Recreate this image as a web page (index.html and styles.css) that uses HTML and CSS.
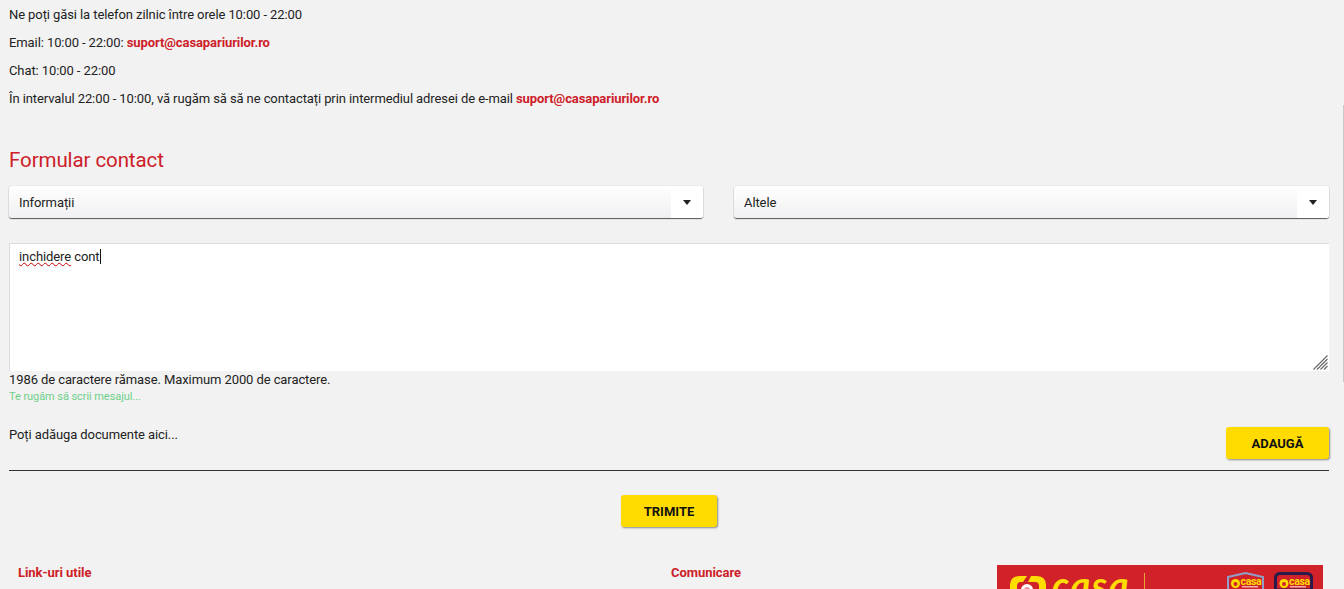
FILE: index.html
```html
<!DOCTYPE html>
<html lang="ro">
<head>
<meta charset="utf-8">
<title>Formular contact</title>
<link rel="stylesheet" href="styles.css">
</head>
<body>
<main class="page">
  <section class="info">
    <p>Ne poți găsi la telefon zilnic între orele 10:00 - 22:00</p>
    <p>Email: 10:00 - 22:00: <a href="#">suport@casapariurilor.ro</a></p>
    <p>Chat: 10:00 - 22:00</p>
    <p>În intervalul 22:00 - 10:00, vă rugăm să să ne contactați prin intermediul adresei de e-mail <a href="#">suport@casapariurilor.ro</a></p>
  </section>
  <h1 class="title">Formular contact</h1>
  <div class="selects">
    <div class="select"><span class="select-label">Informații</span><span class="select-btn"><i class="caret"></i></span></div>
    <div class="select"><span class="select-label">Altele</span><span class="select-btn"><i class="caret"></i></span></div>
  </div>
  <div class="textarea">
    <span class="typed"><span class="misspelled">inchidere</span> cont</span><span class="cursor"></span>
    <svg class="grip" width="15" height="15" viewBox="0 0 15 15"><path d="M0.500 14.500L14.500 0.500M4 14.500L14.500 4M7.500 14.500L14.500 7.500M11 14.500L14.500 11" stroke="#666" stroke-width="1.100" fill="none"/></svg>
  </div>
  <p class="counter">1986 de caractere rămase. Maximum 2000 de caractere.</p>
  <p class="hint">Te rugăm să scrii mesajul...</p>
  <div class="attach">
    <span class="attach-label">Poți adăuga documente aici...</span>
    <button class="btn btn-add" type="button">ADAUGĂ</button>
  </div>
  <div class="send"><button class="btn btn-send" type="button">TRIMITE</button></div>
  <footer class="footer">
    <h2 class="foot-a">Link-uri utile</h2>
    <h2 class="foot-b">Comunicare</h2>
    <div class="banner">
      <svg class="mark" width="36" height="14" viewBox="0 0 36 14"><path d="M0 14V9Q0 0 10 0H17L13 6H11Q7 6 7 10V14Z" fill="#ffdd00"/><path d="M21 0H26Q36 0 36 9V14H29V10Q29 6 25 6H18Z" fill="#ffdd00"/><circle cx="17" cy="14" r="6" fill="#fff"/><circle cx="17" cy="14" r="3" fill="#e8909a"/></svg>
      <span class="casa">casa</span>
      <span class="divider"></span>
      <svg class="shield shield-a" width="37" height="18" viewBox="0 0 37 18"><path d="M1 5L18.500 1L36 5V18H1Z" fill="#d12229" stroke="#8fa0c8" stroke-width="2"/><circle cx="8.500" cy="11.500" r="4.500" fill="#ffdd00"/><circle cx="8.500" cy="12" r="2" fill="#d12229"/><text class="shield-name" x="13.500" y="12.500">casa</text><rect x="15" y="14" width="16" height="1.500" fill="#f0b0a8"/></svg>
      <svg class="shield shield-b" width="39" height="18" viewBox="0 0 39 18"><path d="M1.500 6Q1.500 2 6 1.500H33Q37.500 2 37.500 6V18H1.500Z" fill="#d12229" stroke="#2a1c4a" stroke-width="3"/><circle cx="10" cy="11.500" r="4.500" fill="#ffdd00"/><circle cx="10" cy="12" r="2" fill="#d12229"/><text class="shield-name" x="15" y="12.500">casa</text><rect x="16" y="14" width="16" height="1.500" fill="#f0b0a8"/></svg>
    </div>
  </footer>
  <span class="scroll-edge"></span>
</main>
</body>
</html>
```
FILE: styles.css
```css
* { box-sizing: border-box; }
html, body { margin: 0; height: 589px; overflow: hidden; }
body { background: #f2f2f2; color: #222; font: 13px/16px Roboto, sans-serif; letter-spacing: -0.09px; }
.page { position: relative; height: 589px; padding: 0 15px 0 9px; }
.info { padding-top: 7px; }
.info p { margin: 0 0 12px; }
.info a { color: #cd2028; font-weight: 700; text-decoration: none; }
.title { margin: 40px 0 13px; font-size: 20.5px; line-height: 26px; font-weight: 400; color: #cd2028; }
.selects { display: flex; justify-content: space-between; }
.select { height: 32px; display: flex; align-items: center; justify-content: space-between; background: linear-gradient(#fff, #f0f0f2); border-radius: 3px; box-shadow: 0 1px 1px #555, 0 0 1px #aaa; }
.select:first-child { width: 694px; }
.select:last-child { width: 595px; }
.select-label { padding: 1px 0 0 10px; }
.select-btn { width: 32px; height: 100%; display: flex; align-items: center; justify-content: center; background: #fff; border-radius: 0 3px 3px 0; }
.caret { width: 0; height: 0; border: 4px solid transparent; border-top: 5px solid #222; border-bottom: 0; }
.textarea { position: relative; height: 128px; margin-top: 25px; padding: 5px 9px; background: #fff; border: 1px solid #ddd; border-width: 1px 0 0 1px; }
.misspelled { text-decoration: underline wavy #c00; text-decoration-thickness: 1px; }
.cursor { display: inline-block; width: 1px; height: 15px; background: #111; vertical-align: -3px; }
.grip { position: absolute; right: 1px; bottom: 1px; }
.counter { margin: 1px 0 0; }
.hint { margin: 2px 0 0; font-size: 11px; line-height: 13px; letter-spacing: -0.07px; color: #6fcf8a; }
.attach { display: flex; justify-content: space-between; align-items: flex-start; height: 59px; margin-top: 9px; padding-top: 15px; border-bottom: 1px solid #333; }
.attach-label { line-height: 16px; }
.btn { height: 32px; border: 0; border-radius: 3px; background: #ffdb00; color: #111; font: 700 13px Roboto, sans-serif; box-shadow: 1px 1px 2px #888; }
.btn-add { width: 103px; }
.btn-send { width: 96px; }
.send { display: flex; justify-content: center; margin-top: 24px; }
.footer { position: relative; height: 25px; margin-top: 37px; }
.foot-a, .foot-b { position: absolute; top: 1px; margin: 0; font-size: 13px; line-height: 16px; font-weight: 700; letter-spacing: -0.05px; color: #cd2028; }
.foot-a { left: 9px; }
.foot-b { left: 662px; }
.banner { position: absolute; left: 988px; top: 1px; width: 326px; height: 24px; display: flex; align-items: flex-start; background: #d12229; overflow: hidden; }
.mark { flex: none; margin: 11px 0 0 13px; }
.casa { flex: none; width: 78px; margin: 0 0 0 6px; color: #ffdd00; font: italic 700 38px/38px Lato, sans-serif; letter-spacing: 1.5px; }
.divider { flex: none; width: 1px; height: 24px; margin: 8px 0 0 14px; background: #e9a13a; }
.shield { flex: none; margin-top: 7px; }
.shield-a { margin-left: 82px; }
.shield-b { margin-left: 10px; }
.shield-name { font: 700 10.5px Roboto, sans-serif; letter-spacing: -0.3px; fill: #ffdd00; }
.scroll-edge { position: absolute; top: 105px; right: 0; width: 1px; height: 277px; background: #c9c9c9; }
```
